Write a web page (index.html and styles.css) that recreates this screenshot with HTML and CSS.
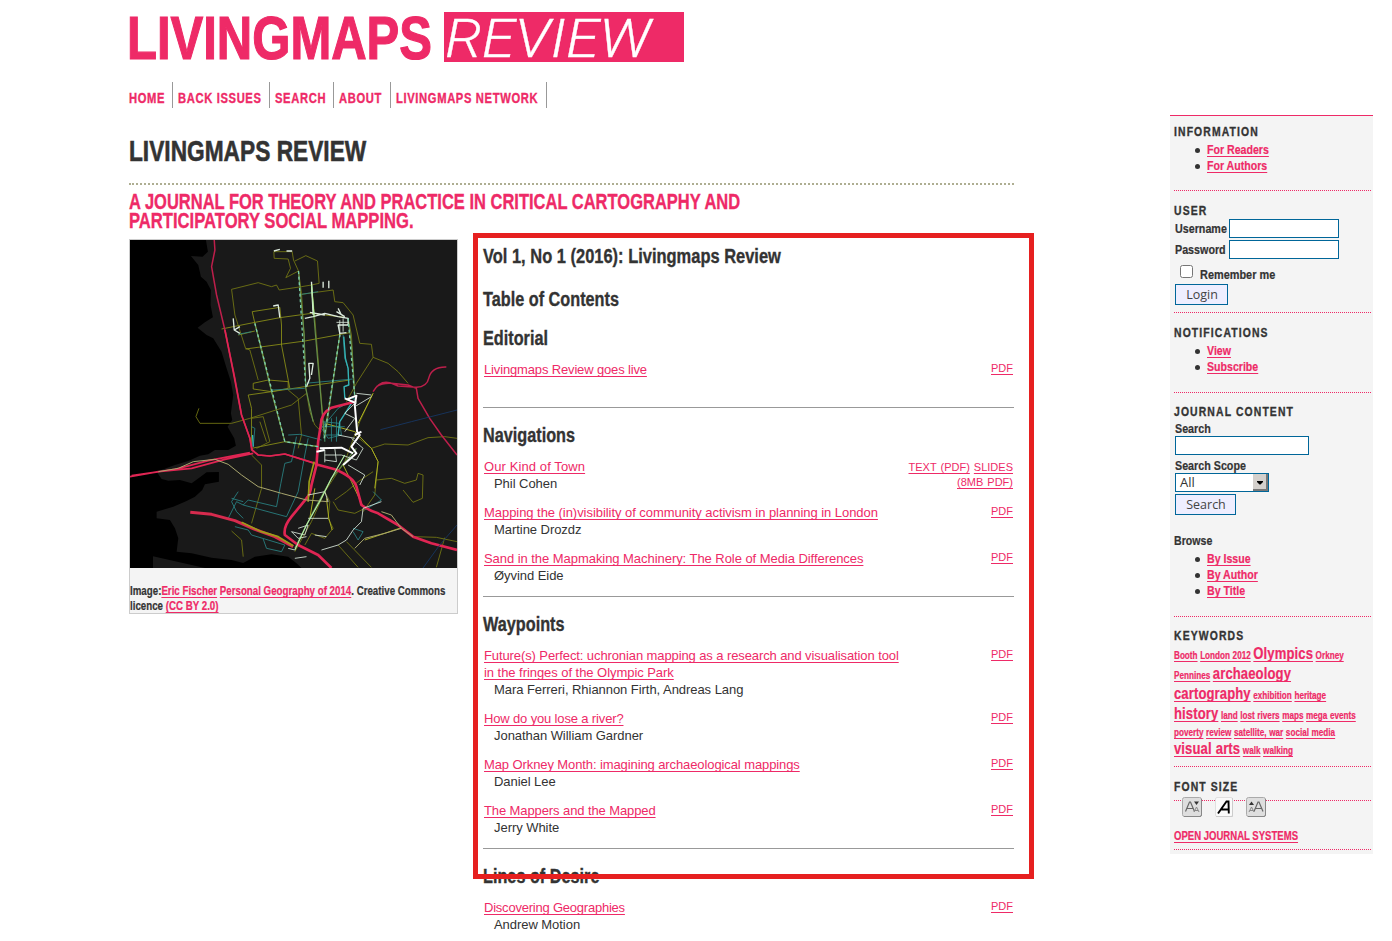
FILE: index.html
```
<!DOCTYPE html>
<html lang="en">
<head>
<meta charset="utf-8">
<title>Livingmaps Review</title>
<link rel="stylesheet" href="styles.css">
</head>
<body>
<div class="page">
  <main class="main">
    <svg class="logo" width="556" height="52" viewBox="0 0 556 52" role="img" aria-label="Livingmaps Review">
      <text class="logo-name" x="-2" y="47" textLength="305" lengthAdjust="spacingAndGlyphs">LIVINGMAPS</text>
      <rect x="315" y="0" width="240" height="50" fill="#ee2a67"/>
      <text class="logo-review" x="316" y="44.500" textLength="206" lengthAdjust="spacingAndGlyphs">REVIEW</text>
    </svg>
    <ul class="nav">
      <li class="n1"><a>HOME</a></li><li class="n2"><a>BACK ISSUES</a></li><li class="n3"><a>SEARCH</a></li><li class="n4"><a>ABOUT</a></li><li class="n5"><a>LIVINGMAPS NETWORK</a></li>
    </ul>
    <h1><span>LIVINGMAPS REVIEW</span></h1>
    <h2><span>A JOURNAL FOR THEORY AND PRACTICE IN CRITICAL CARTOGRAPHY AND</span><br><span>PARTICIPATORY SOCIAL MAPPING.</span></h2>
    <div class="columns">
      <figure>
        <svg class="map" width="327" height="328" viewBox="15 15 982 984" preserveAspectRatio="none" fill="none" stroke-linejoin="round">
          <rect x="15" y="15" width="982" height="984" fill="#191919"/>
          <path fill="#000" d="M15 15H243L249 50 233 65 198 63 220 90 228 125 245 140 258 165 257 210 264 247 240 262 218 278 245 300 265 310 290 350 305 400 318 440 325 480 318 535 322 555 308 575 328 610 333 632 310 645 270 645 250 658 225 662 190 678 150 690 95 710 110 732 130 737 165 735 200 745 225 727 245 712 282 711 282 740 240 748 232 765 210 785 185 798 145 815 95 830 95 850 135 855 150 880 160 910 155 950 200 955 260 968 320 975 355 984 390 965 440 958 490 965 515 985 530 999H240L84 964V999H15Z"/>
          <g stroke="#777b13" stroke-width="2.500">
            <path d="M447 50L502 50 506 75 521 108 530 175 538 300 543 460 555 530 570 570 590 590M447 50L448 70 490 72 497 100 483 128 521 108M510 78L543 62 578 78 583 145 560 150 530 155 463 165 455 150 440 155 400 143 320 163 330 240 362 340 375 345 400 435M530 178L625 165 630 200 655 203 685 240 705 325 740 328 745 367 695 445 665 500M745 367L790 385 820 410 850 445"/>
            <path stroke="#8f9417" d="M290 282L380 264 465 248 560 235 660 247M382 230L465 217 470 270 470 330 495 460M382 230L390 265 410 340 440 470 480 620M340 300L390 288M362 342L540 318 675 293M385 445L430 435 490 440 490 460 440 470 385 462ZM370 480L440 470 540 455 675 435M370 480L380 520 380 640 480 620 580 635"/>
            <path d="M560 145L570 250 600 620M645 300L620 470 597 600M670 250L680 300 690 480M222 520L213 545 225 565 320 565 375 550 500 510 545 475M405 560L425 620M380 550L415 545 435 620 395 640M490 465L520 490 530 600 520 640M380 660L410 690 410 760 380 865M320 888L350 915 355 965"/>
            <path d="M745 475L705 560 690 600 740 640 760 680 750 780 715 830M740 640L780 627 850 630 910 608 960 605 997 610M755 735L800 730 840 745 875 735 880 715 895 720 893 790 865 802 835 765M630 795L665 770 700 740 745 710M625 800L640 825 690 835 720 820M690 600L660 680 600 770 560 860 510 950M600 770L615 800 610 850 625 880 600 910 560 895 540 930M640 930L700 997M665 920L740 997M870 905L935 907 997 920M960 908L935 997"/>
            <path stroke="#a8ad20" stroke-width="3" d="M745 475L700 565M600 565L690 590 740 640 760 680 750 760M655 690L680 740 715 815M720 915L830 878M605 790L612 850 622 885M570 760L555 850"/>
          </g>
          <g stroke="#2a8587" stroke-width="2.500">
            <path d="M655 300L660 370 670 400 672 450 658 455 660 490 690 490M530 178L580 170M340 298L380 290M440 465L540 460M540 445L685 432M380 575L390 580 385 635M490 600L525 598 590 615M590 560L645 565 650 600 610 610 590 580 640 520 695 490M600 620V560M620 620V550M635 620V545M595 600H650M590 575H660"/>
            <path d="M515 605L500 680 480 685 468 745 455 815 370 795 355 810 335 800 310 850M550 610L540 660 520 770 485 845 355 810M320 790L355 800M340 770L320 800 335 830 355 850M330 875L370 885 380 900 430 915 480 930 470 950 425 940 415 912M745 770L770 795 720 825M685 880L715 890 700 915 685 890"/>
            <path stroke="#35b3b5" stroke-width="4" d="M657 305L662 370 670 400 672 450 658 455 660 490M640 600L645 560 680 505M383 600L385 635"/>
          </g>
          <path stroke="#65904d" stroke-width="3.500" d="M521 108L538 300 543 460 565 560M560 150L572 300 597 590M390 265L440 470 480 620 580 635M670 250L680 330 690 485M645 300L600 610M695 640L620 730 560 840 510 940"/>
          <g stroke="#bd1f4b" stroke-width="4.500">
            <path d="M268 15L270 45 260 95 275 180 300 285 330 430 350 540 375 610 380 645 400 660 435 663 480 657 570 685"/>
            <path stroke="#e02553" stroke-width="5" d="M15 725L100 710 200 700 300 673 385 655M20 722L150 703 250 677 375 653M300 285L325 410 350 540M350 540L375 610 382 645 400 660 435 663 480 657 570 685"/>
            <path stroke="#e02553" stroke-width="8" d="M690 500L620 518Q588 535 588 570L580 620 575 690 560 750Q556 780 545 790L500 845Q475 875 480 900L520 930 580 960 620 999M570 687L630 703Q685 725 695 755L710 810Q735 828 760 835L820 870 865 905 920 925 997 945"/>
            <path d="M745 470Q765 435 795 443L820 453 875 457Q907 455 912 430 920 395 965 396M755 455Q775 443 800 445L850 450 875 460 880 490 915 550 950 600 997 660"/>
            <path stroke="#d72b4e" stroke-width="9" d="M196 832L260 838 330 857 390 883 450 905 505 935"/>
          </g>
          <path stroke="#9c9e18" stroke-width="5" d="M350 862L410 890 460 905 505 932M550 800L553 740 568 680"/>
          <path stroke="#aaa76e" stroke-width="3" d="M100 710L160 700 205 680 270 673 310 688 350 720 400 755 470 775 545 795 610 800M690 940L720 910 780 895 830 880 800 840 770 830M830 880L865 905"/>
          <g stroke="#dceade" stroke-width="4">
            <path d="M447 48L465 43M485 48H502M325 250L328 285 345 295M328 285L345 275M445 213L460 210 465 248M560 140L565 240M595 140V158M612 137V160M540 250L565 245 600 235 640 245 670 250 670 270 640 270 645 295 665 293M545 455L555 430 552 385 565 385 560 420M555 232L600 240M640 220L650 240M635 230L660 245"/>
            <path stroke="#fff" stroke-width="6" d="M667 493L695 482 690 510 697 590 705 600 680 635 695 655 655 690M585 640L650 638 685 655M575 650L600 645M690 600L710 590M660 490L695 505"/>
            <path stroke-width="2.500" d="M680 610L715 640 695 675 650 660 600 660M630 640L635 680 600 675M600 645V682M670 690L720 720 705 750M695 475L740 480M690 515L740 485M660 590L690 550 660 535 695 500M640 600L690 610M550 780L600 770 610 800M550 850H610M520 880L550 870 540 900 500 890 520 910 545 905M570 900L605 905M490 940L510 945M510 970L545 965M590 945L640 930 665 915 685 885 710 860 715 820 770 800M645 255V305M655 250V290M635 262H670"/>
            <path stroke="#7bd0ae" stroke-dasharray="9 8" d="M521 108L543 460M390 265L480 620 580 635M670 250L690 485M598 610L645 300"/>
            <path stroke="#b6f0a8" stroke-width="3.500" d="M660 660L620 730 590 790 545 870 510 945M560 150L568 245"/>
          </g>
          <path stroke="#173867" stroke-width="2.500" d="M767 584L860 560 997 525M895 999L945 930 997 870"/>
        </svg>
        <figcaption>Image:<a>Eric Fischer</a> <a>Personal Geography of 2014</a>. Creative Commons<br>licence <a>(CC BY 2.0)</a></figcaption>
      </figure>
      <section class="issue">
        <h3 class="volume"><span>Vol 1, No 1 (2016): Livingmaps Review</span></h3>
        <h3 class="toc"><span>Table of Contents</span></h3>
        <div class="group first">
          <h3><span>Editorial</span></h3>
          <div class="entry"><div><a class="tight">Livingmaps Review goes live</a><p></p></div><div class="files"><a>PDF</a></div></div>
        </div>
        <div class="group">
          <h3><span>Navigations</span></h3>
          <div class="entry"><div><a class="loose">Our Kind of Town</a><p>Phil Cohen</p></div><div class="files low"><a>TEXT (PDF)</a> <a>SLIDES<br>(8MB PDF)</a></div></div>
          <div class="entry"><div><a>Mapping the (in)visibility of community activism in planning in London</a><p>Martine Drozdz</p></div><div class="files"><a>PDF</a></div></div>
          <div class="entry"><div><a>Sand in the Mapmaking Machinery: The Role of Media Differences</a><p>Øyvind Eide</p></div><div class="files"><a>PDF</a></div></div>
        </div>
        <div class="group">
          <h3><span>Waypoints</span></h3>
          <div class="entry"><div><a><span class="snug">Future(s) Perfect: uchronian mapping as a research and visualisation tool</span><br>in the fringes of the Olympic Park</a><p>Mara Ferreri, Rhiannon Firth, Andreas Lang</p></div><div class="files"><a>PDF</a></div></div>
          <div class="entry"><div><a class="tight">How do you lose a river?</a><p>Jonathan William Gardner</p></div><div class="files"><a>PDF</a></div></div>
          <div class="entry"><div><a class="snug">Map Orkney Month: imagining archaeological mappings</a><p>Daniel Lee</p></div><div class="files"><a>PDF</a></div></div>
          <div class="entry"><div><a class="snug">The Mappers and the Mapped</a><p>Jerry White</p></div><div class="files"><a>PDF</a></div></div>
        </div>
        <div class="group">
          <h3><span>Lines of Desire</span></h3>
          <div class="entry"><div><a class="tighter">Discovering Geographies</a><p>Andrew Motion</p></div><div class="files"><a>PDF</a></div></div>
        </div>
        <div class="highlight"></div>
      </section>
    </div>
  </main>
  <aside>
    <div class="block b-info">
      <h4>INFORMATION</h4>
      <ul><li><a>For Readers</a></li><li><a>For Authors</a></li></ul>
    </div>
    <div class="block b-user">
      <h4>USER</h4>
      <div class="login">
        <label><span>Username</span></label><input type="text">
        <label><span>Password</span></label><input type="password">
      </div>
      <div class="remember"><input type="checkbox"><span class="cond">Remember me</span></div>
      <button class="login-btn">Login</button>
    </div>
    <div class="block b-notify">
      <h4>NOTIFICATIONS</h4>
      <ul><li><a>View</a></li><li><a>Subscribe</a></li></ul>
    </div>
    <div class="block b-content">
      <h4>JOURNAL CONTENT</h4>
      <div class="search">
        <span class="cond">Search</span>
        <input type="text">
        <span class="cond scope">Search Scope</span>
        <div class="select"><span>All</span><svg width="15" height="17" viewBox="0 0 15 17"><rect width="15" height="17" fill="#777"/><rect width="13" height="15" fill="#d4d0cc"/><path d="M4 7H10V8L7.500 10.500H6.500L4 8Z" fill="#000"/></svg></div>
        <button class="search-btn">Search</button>
      </div>
      <span class="cond browse">Browse</span>
      <ul><li><a>By Issue</a></li><li><a>By Author</a></li><li><a>By Title</a></li></ul>
    </div>
    <div class="block b-keys">
      <h4>KEYWORDS</h4>
      <div class="cloud">
        <div><a>Booth</a> <a>London 2012</a> <a class="big">Olympics</a> <a>Orkney</a></div>
        <div><a>Pennines</a> <a class="big">archaeology</a></div>
        <div><a class="big">cartography</a> <a>exhibition</a> <a>heritage</a></div>
        <div><a class="big">history</a> <a>land</a> <a>lost rivers</a> <a>maps</a> <a>mega events</a></div>
        <div class="small"><a>poverty</a> <a>review</a> <a>satellite, war</a> <a>social media</a></div>
        <div class="last"><a class="big">visual arts</a> <a>walk</a> <a>walking</a></div>
      </div>
    </div>
    <div class="block b-size"><h4>FONT SIZE</h4></div>
    <div class="block b-ojs">
      <div class="sizes">
        <svg width="20" height="20" viewBox="0 0 20 20"><rect x=".5" y=".5" width="19" height="19" rx="2" fill="#dedede" stroke="#aaa"/><path d="M19.500 2V18Q19.500 19.500 18 19.500H2" stroke="#888" fill="none"/><path d="M3.500 14.500L7.500 5H8.500L12.500 14.500M5 11.500H11" stroke="#666" stroke-width="1.200" fill="none"/><path d="M12 15L14.500 10 17 15M13 13.500H16" stroke="#888" fill="none"/><path d="M12 4.500H17L14.500 8Z" fill="#333"/></svg>
        <svg width="18" height="20" viewBox="0 0 18 20"><rect x=".5" y=".5" width="17" height="19" rx="1.500" fill="#fafafa" stroke="#e0e0e0"/><path d="M17.500 1V19.500H1" stroke="#ccc" fill="none"/><path d="M3 16.500L11.500 4.500H13.500L13.800 16.500M6.500 12.500H13.500" stroke="#000" stroke-width="1.900" fill="none"/></svg>
        <svg width="20" height="20" viewBox="0 0 20 20"><rect x=".5" y=".5" width="19" height="19" rx="2" fill="#dedede" stroke="#aaa"/><path d="M19.500 2V18Q19.500 19.500 18 19.500H2" stroke="#888" fill="none"/><path d="M8 14.500L12 5H13L17 14.500M9.500 11.500H15.500" stroke="#666" stroke-width="1.200" fill="none"/><path d="M3 15L5.500 10 8 15M4 13.500H7" stroke="#888" fill="none"/><path d="M3 8H8L5.500 4.500Z" fill="#333"/></svg>
      </div>
      <a class="cond ojs">OPEN JOURNAL SYSTEMS</a>
    </div>
  </aside>
</div>
</body>
</html>
```
FILE: styles.css
```
* { box-sizing: border-box; }
body { margin: 0; height: 941px; overflow: hidden; background: #fff; color: #333; font: 13px/17px "Liberation Sans", Arial, sans-serif; }
h1, h2, h3, h4, ul, p, figure { margin: 0; padding: 0; }
ul { list-style: none; }
a { color: #ee2a67; text-decoration: underline; text-decoration-thickness: 1px; text-underline-offset: 2px; text-decoration-skip-ink: none; }
.page { display: flex; gap: 156px; padding-left: 129px; height: 941px; }
.main { width: 885px; flex: none; padding-top: 12px; }
.logo { display: block; overflow: visible; }
.logo text { font-family: "Liberation Sans", Arial, sans-serif; }
.logo .logo-name { font-size: 62px; font-weight: bold; fill: #ee2a67; stroke: #ee2a67; stroke-width: 1.2px; }
.logo .logo-review { font-family: Roboto, sans-serif; font-size: 53px; font-weight: 300; font-style: italic; fill: #fff; stroke: #fff; stroke-width: 0.3px; }

.nav { display: flex; margin-top: 18px; height: 26px; }
.nav li { border-right: 1px solid #999; padding: 8px 0 0 5px; white-space: nowrap; }
.nav .n1 { width: 44px; padding-left: 0; }
.nav .n2 { width: 97px; }
.nav .n3 { width: 64px; }
.nav .n4 { width: 57px; }
.nav .n5 { width: 156px; }
.nav a { display: block; width: 0; font-weight: bold; font-size: 14px; letter-spacing: 0.8px; text-decoration: none; transform: scaleX(0.8); transform-origin: 0 0; }
.nav a, h1, h2, h3, h4 { -webkit-text-stroke: 0.35px currentColor; }

h1, h2, h3 { font-weight: bold; white-space: nowrap; }
h1 span, h2 span, h3 span { display: inline-block; transform-origin: 0 0; }
h1 { margin-top: 24px; height: 53px; font-size: 30px; line-height: 38px; border-bottom: 2px dotted #aeae92; -webkit-text-stroke-width: 0.6px; }
h1 span { transform: scaleX(0.757); }
h2 { margin-top: 7px; font-size: 22px; line-height: 19px; height: 39px; color: #ee2a67; }
h2 span { transform: scaleX(0.75); }
h2 span:last-child { transform: scaleX(0.755); }
h3 { font-size: 20px; line-height: 20px; height: 20px; }
h3 span { transform: translateY(-1px) scaleX(0.812); }
.volume span { transform: translateY(-1px) scaleX(0.823); }

.columns { display: flex; align-items: flex-start; gap: 25px; margin-top: 8px; }
figure { width: 329px; height: 375px; border: 1px solid #ccc; background: #f4f4f4; }
.map { display: block; }
figcaption { width: 398px; margin-top: 16px; font-size: 12px; line-height: 15px; font-weight: bold; transform: scaleX(0.811); transform-origin: 0 0; -webkit-text-stroke: 0.2px; }

.issue { position: relative; width: 531px; padding-top: 8px; }
.toc { margin-top: 23px; }
.group { border-top: 1px solid #999; padding-top: 18px; }
.group.first { border: 0; padding-top: 19px; }
.group h3 { margin-bottom: 12px; }
.entry { display: flex; justify-content: space-between; padding: 0 1px 12px; letter-spacing: -0.05px; }
.entry p { min-height: 17px; padding-left: 10px; }
.tight { letter-spacing: -0.15px; }
.tighter { letter-spacing: -0.22px; }
.snug { letter-spacing: -0.1px; }
.loose { letter-spacing: 0.1px; }
.files { font-size: 11px; line-height: 15px; text-align: right; letter-spacing: 0; }
.files.low { padding-top: 2px; word-spacing: 1px; }
.highlight { position: absolute; left: -10px; top: -6px; width: 561px; height: 646px; border: 5px solid #e62020; }

aside { width: 203px; height: 739px; margin-top: 115px; border-top: 1px solid #ee2a67; background: #f4f4f4; padding: 0 2px 0 4px; font-weight: bold; line-height: 16px; flex: none; -webkit-text-stroke: 0.2px; }
.block { display: flow-root; border-bottom: 1px dotted #ee2a67; padding-top: 12px; white-space: nowrap; }
.b-info { height: 75px; padding-top: 8px; }
.b-user { height: 122px; }
.b-notify { height: 80px; }
.b-content { height: 224px; padding-top: 11px; }
.b-keys { height: 150px; padding-top: 11px; }
.b-size { height: 34px; }
.b-ojs { height: 49px; padding: 0; }
h4 { font-size: 13px; line-height: 16px; letter-spacing: 1.4px; transform: scaleX(0.8); transform-origin: 0 0; }
aside ul { margin-top: 2px; padding-left: 33px; }
aside li { display: flex; align-items: center; height: 16px; }
aside li::before { content: ""; width: 5px; height: 5px; margin: 0 7px 0 -12px; border-radius: 50%; background: #333; }
aside li a, .cond, .login label span { display: block; width: max-content; transform: scaleX(0.815); transform-origin: 0 50%; }
aside li a { transform: scaleX(0.815); }
input[type="text"], input[type="password"] { display: block; height: 19px; margin: 0; padding: 0; border: 1px solid #069; border-radius: 0; background: #fff; }
.login { display: grid; grid-template-columns: 54px 110px; gap: 2px 0; margin: 0 0 0 1px; }
.login label { width: 54px; height: 19px; padding-top: 2px; }
.login label span { transform: scaleX(0.825); }
.login input { width: 110px; }
.remember { display: flex; height: 25px; padding: 6px 0 0 6px; }
.remember input { width: 13px; height: 13px; margin: 0 7px 0 0; }
.remember .cond { margin-top: 2px; transform: scaleX(0.84); }
button { display: block; margin: 0 0 0 1px; padding: 0 0 0 1px; height: 21px; border: 1px solid #069; background: #eef; color: #444; font: 12.5px/17px "Open Sans", sans-serif; -webkit-text-stroke: 0; }
.login-btn { width: 53px; }
.search { padding-left: 1px; }
.search .cond { position: relative; top: 1px; transform: scaleX(0.825); }
.search input { width: 134px; }
.scope { margin-top: 2px; }
.select { display: flex; justify-content: space-between; width: 94px; height: 19px; border: 1px solid #069; background: #fff; padding-left: 4px; font: 13px/17px "Open Sans", sans-serif; -webkit-text-stroke: 0; }
.search-btn { width: 61px; margin: 2px 0 0; }
.browse { margin-top: 18px; transform: scaleX(0.815); }
.cloud { width: 246px; margin-top: 2px; font-size: 10px; line-height: 20px; word-spacing: 0.4px; transform: scaleX(0.815); transform-origin: 0 0; }
.cloud .big { font-size: 16px; line-height: 0; letter-spacing: 0.15px; }
.cloud .small { line-height: 14px; }
.cloud .last { line-height: 22px; }
.sizes { display: flex; gap: 13px; padding-left: 8px; margin-top: -4px; position: relative; }
.ojs { margin-top: 11px; font-size: 12px; transform: scaleX(0.796); }
```
